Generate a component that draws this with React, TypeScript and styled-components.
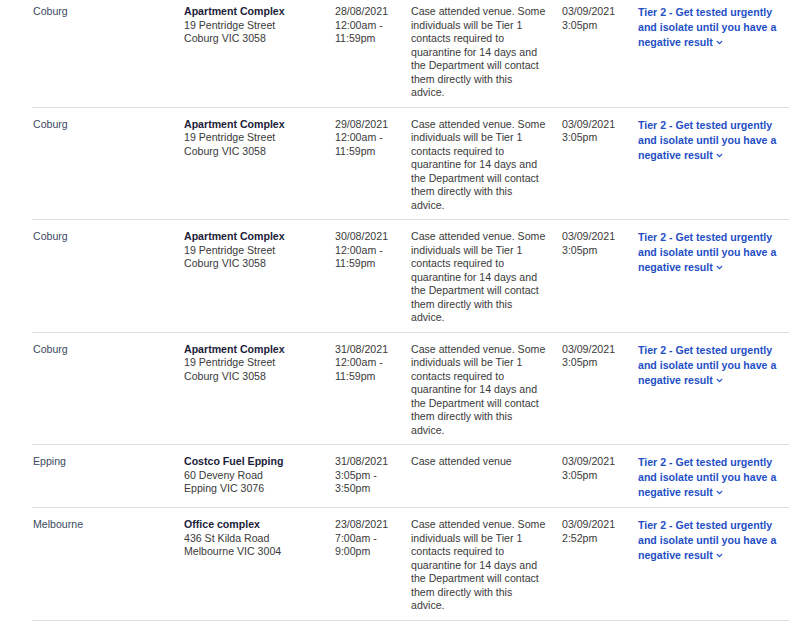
import styled, { createGlobalStyle } from 'styled-components';
import { ChevronDown } from 'lucide-react';

interface IExposureSite {
  suburb: string;
  siteTitle: string;
  street: string;
  town: string;
  date: string;
  timeStart: string;
  timeEnd: string;
  notes: string;
  added: string;
  addedTime: string;
}

const LONG_NOTE =
  'Case attended venue. Some individuals will be Tier 1 contacts required to quarantine for 14 days and the Department will contact them directly with this advice.';

const apartment = (date: string): IExposureSite => ({
  suburb: 'Coburg',
  siteTitle: 'Apartment Complex',
  street: '19 Pentridge Street',
  town: 'Coburg VIC 3058',
  date,
  timeStart: '12:00am -',
  timeEnd: '11:59pm',
  notes: LONG_NOTE,
  added: '03/09/2021',
  addedTime: '3:05pm',
});

const sites: IExposureSite[] = [
  apartment('28/08/2021'),
  apartment('29/08/2021'),
  apartment('30/08/2021'),
  apartment('31/08/2021'),
  {
    suburb: 'Epping',
    siteTitle: 'Costco Fuel Epping',
    street: '60 Deveny Road',
    town: 'Epping VIC 3076',
    date: '31/08/2021',
    timeStart: '3:05pm -',
    timeEnd: '3:50pm',
    notes: 'Case attended venue',
    added: '03/09/2021',
    addedTime: '3:05pm',
  },
  {
    suburb: 'Melbourne',
    siteTitle: 'Office complex',
    street: '436 St Kilda Road',
    town: 'Melbourne VIC 3004',
    date: '23/08/2021',
    timeStart: '7:00am -',
    timeEnd: '9:00pm',
    notes: LONG_NOTE,
    added: '03/09/2021',
    addedTime: '2:52pm',
  },
];

const App = () => {
  return (
    <>
      <GlobalStyle />
      <Table>
        {sites.map((site, idx) => (
          <Row key={site.date + site.siteTitle + idx}>
            <SuburbCell>{site.suburb}</SuburbCell>
            <Cell>
              <SiteTitle>{site.siteTitle}</SiteTitle>
              <br />
              {site.street}
              <br />
              {site.town}
            </Cell>
            <Cell>
              {site.date}
              <br />
              {site.timeStart}
              <br />
              {site.timeEnd}
            </Cell>
            <NotesCell>{site.notes}</NotesCell>
            <Cell>
              {site.added}
              <br />
              {site.addedTime}
            </Cell>
            <HealthCell>
              <HealthLink>
                Tier 2 - Get tested urgently and isolate until you have a
                negative result
                <Chevron size={9} strokeWidth={3.5} />
              </HealthLink>
            </HealthCell>
          </Row>
        ))}
      </Table>
    </>
  );
};

const GlobalStyle = createGlobalStyle`
  body {
    margin: 0;
    background: #ffffff;
    font-family: 'Liberation Sans', Arial, sans-serif;
  }
`;

const Table = styled.div`
  display: flex;
  flex-direction: column;
  width: 757px;
  margin: -5px 0 0 32px;
`;

const Row = styled.div`
  display: grid;
  grid-template-columns: 151px 151px 76px 151px 76px 152px;
  padding: 10px 0 7px 1px;
  border-bottom: 1px solid #dcdee2;
`;

const Cell = styled.div`
  padding-right: 12px;
  font-size: 10.6px;
  line-height: 13.6px;
  color: #3a3a3a;
`;

const SuburbCell = styled(Cell)`
  color: #3b4a5e;
`;

const NotesCell = styled(Cell)`
  padding-right: 14px;
  line-height: 13.5px;
`;

const SiteTitle = styled.strong`
  font-weight: 700;
  color: #1c1d3a;
`;

const HealthCell = styled(Cell)`
  padding-right: 8px;
  line-height: 15px;
`;

const HealthLink = styled.span`
  font-weight: 700;
  color: #1f4fc6;
  cursor: pointer;
`;

const Chevron = styled(ChevronDown)`
  margin-left: 2px;
  vertical-align: -1px;
`;

export default App;
